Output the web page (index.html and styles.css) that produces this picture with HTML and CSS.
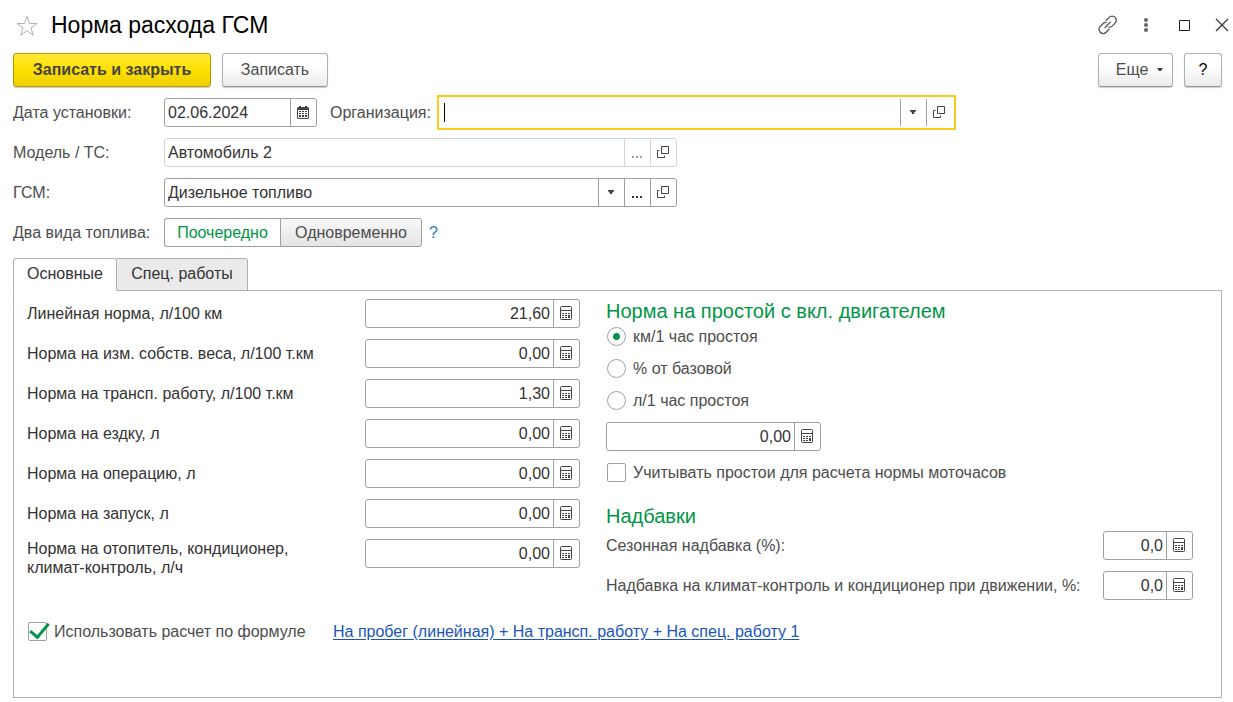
FILE: index.html
```html
<!DOCTYPE html>
<html lang="ru">
<head>
<meta charset="utf-8">
<meta name="viewport" content="width=device-width, initial-scale=1">
<title>Норма расхода ГСМ</title>
<link rel="stylesheet" href="styles.css">
</head>
<body>
<svg class="sprite" aria-hidden="true">
  <symbol id="calc" viewBox="0 0 12 14">
    <path d="M1.5 .5h9a1 1 0 0 1 1 1v11a1 1 0 0 1-1 1h-9a1 1 0 0 1-1-1v-11a1 1 0 0 1 1-1zM.5 4.5h11" fill="none" stroke="#444"/>
    <path d="M2 7h2v1H2zM5 7h2v1H5zM8 7h2v1H8zM2 9h2v1H2zM5 9h2v1H5zM2 11h2v1H2zM5 11h2v1H5zM8 9h2v3H8z" fill="#444"/>
  </symbol>
  <symbol id="open" viewBox="0 0 12 12">
    <path d="M4.5 .5h7v7h-7zM2.500 4.500h-2v7h7v-2" fill="none" stroke="#444"/>
  </symbol>
  <symbol id="arrow" viewBox="0 0 6 4">
    <path d="M0 0h6v1L4 3v1H2V3L0 1z" fill="#444"/>
  </symbol>
  <symbol id="dots" viewBox="0 0 10 2">
    <path d="M0 0h2v2H0zM4 0h2v2H4zM8 0h2v2H8z" fill="currentColor"/>
  </symbol>
</svg>

<header class="header">
  <button class="icon-btn" aria-label="В избранное"><svg width="22" height="22" viewBox="0 0 22 22"><path d="M11 1.500l2.500 7h7.500l-6 4.400 2.300 7.300-6.300-4.500-6.300 4.500L7 12.900 1 8.500h7.500z" fill="none" stroke="#aab2ba"/></svg></button>
  <h1 class="title">Норма расхода ГСМ</h1>
  <div class="window-tools">
    <button class="icon-btn" aria-label="Ссылка"><svg width="20" height="20" viewBox="0 0 20 20" fill="none" stroke="#555" stroke-width="1.300" stroke-linecap="round"><path d="M8.300 5.300l2.900-2.900a3.900 3.900 0 0 1 5.900 0a3.900 3.900 0 0 1 0 5.700l-3 3a3.900 3.900 0 0 1-3 1.100M11 14.300l-2.900 2.900a3.900 3.900 0 0 1-5.900 0a3.900 3.900 0 0 1 0-5.700l3-3a3.900 3.900 0 0 1 3-1.100M7 12.500l5.400-5.400"/></svg></button>
    <button class="icon-btn" aria-label="Меню"><svg width="20" height="20" viewBox="0 0 20 20" fill="#666"><circle cx="10" cy="5" r="2"/><circle cx="10" cy="10" r="2"/><circle cx="10" cy="15" r="2"/></svg></button>
    <button class="icon-btn" aria-label="Развернуть"><svg width="20" height="20" viewBox="0 0 20 20"><path d="M5.500 5.500h10v10h-10z" fill="none" stroke="#222"/></svg></button>
    <button class="icon-btn" aria-label="Закрыть"><svg width="20" height="20" viewBox="0 0 20 20"><path d="M4 4l12 12M16 4L4 16" fill="none" stroke="#333" stroke-width="1.200"/></svg></button>
  </div>
</header>

<main class="form">
  <div class="commands">
    <button class="btn btn-primary">Записать и закрыть</button>
    <button class="btn btn-save">Записать</button>
    <button class="btn btn-more">Еще <svg width="6" height="3" viewBox="0 0 6 3"><path d="M0 0h6L4 3H2z" fill="#444"/></svg></button>
    <button class="btn btn-help">?</button>
  </div>

  <div class="row">
    <label class="row-label" for="date">Дата установки:</label>
    <div class="field field-date">
      <input id="date" type="text" value="02.06.2024">
      <button aria-label="Календарь"><svg width="12" height="13" viewBox="0 0 12 13"><path d="M2 0h2v1h4V0h2v1h1l1 1v10l-1 1H1l-1-1V2l1-1h1z" fill="#444"/><path d="M1 4h10v8H1z" fill="#fff"/><path d="M2 5h2v1H2zM5 5h2v1H5zM8 5h2v1H8zM2 7h2v1H2zM5 7h2v1H5zM8 7h2v1H8zM2 9h2v2H2zM5 9h2v2H5zM8 9h2v2H8z" fill="#444"/></svg></button>
    </div>
    <label class="org-label" for="org">Организация:</label>
    <div class="field field-ref field-active">
      <span class="caret"></span>
      <input id="org" type="text">
      <button aria-label="Выбрать из списка"><svg width="6" height="4"><use href="#arrow"/></svg></button>
      <button aria-label="Открыть"><svg width="12" height="12"><use href="#open"/></svg></button>
    </div>
  </div>

  <div class="row">
    <label class="row-label" for="model">Модель / ТС:</label>
    <div class="field field-ref field-locked">
      <input id="model" type="text" value="Автомобиль 2" readonly>
      <button class="choose" aria-label="Выбрать"><svg width="10" height="2"><use href="#dots"/></svg></button>
      <button aria-label="Открыть"><svg width="12" height="12"><use href="#open"/></svg></button>
    </div>
  </div>

  <div class="row">
    <label class="row-label" for="fuel">ГСМ:</label>
    <div class="field field-ref">
      <input id="fuel" type="text" value="Дизельное топливо">
      <button aria-label="Выбрать из списка"><svg width="6" height="4"><use href="#arrow"/></svg></button>
      <button class="choose" aria-label="Выбрать"><svg width="10" height="2"><use href="#dots"/></svg></button>
      <button aria-label="Открыть"><svg width="12" height="12"><use href="#open"/></svg></button>
    </div>
  </div>

  <div class="row">
    <span class="row-label" id="two-fuels">Два вида топлива:</span>
    <div class="toggle" role="group" aria-labelledby="two-fuels">
      <button aria-pressed="true">Поочередно</button>
      <button aria-pressed="false">Одновременно</button>
    </div>
    <button class="hint">?</button>
  </div>

  <section class="pages">
    <div class="tabs" role="tablist">
      <button class="tab" role="tab" aria-selected="true">Основные</button>
      <button class="tab" role="tab" aria-selected="false">Спец. работы</button>
    </div>
    <div class="panel" role="tabpanel">
      <div class="norms">
        <div class="norm"><label for="n1">Линейная норма, л/100 км</label><div class="field field-num"><input id="n1" type="text" value="21,60"><button aria-label="Калькулятор"><svg width="12" height="14"><use href="#calc"/></svg></button></div></div>
        <div class="norm"><label for="n2">Норма на изм. собств. веса, л/100 т.км</label><div class="field field-num"><input id="n2" type="text" value="0,00"><button aria-label="Калькулятор"><svg width="12" height="14"><use href="#calc"/></svg></button></div></div>
        <div class="norm"><label for="n3">Норма на трансп. работу, л/100 т.км</label><div class="field field-num"><input id="n3" type="text" value="1,30"><button aria-label="Калькулятор"><svg width="12" height="14"><use href="#calc"/></svg></button></div></div>
        <div class="norm"><label for="n4">Норма на ездку, л</label><div class="field field-num"><input id="n4" type="text" value="0,00"><button aria-label="Калькулятор"><svg width="12" height="14"><use href="#calc"/></svg></button></div></div>
        <div class="norm"><label for="n5">Норма на операцию, л</label><div class="field field-num"><input id="n5" type="text" value="0,00"><button aria-label="Калькулятор"><svg width="12" height="14"><use href="#calc"/></svg></button></div></div>
        <div class="norm"><label for="n6">Норма на запуск, л</label><div class="field field-num"><input id="n6" type="text" value="0,00"><button aria-label="Калькулятор"><svg width="12" height="14"><use href="#calc"/></svg></button></div></div>
        <div class="norm norm-tall"><label for="n7">Норма на отопитель, кондиционер,<br>климат-контроль, л/ч</label><div class="field field-num"><input id="n7" type="text" value="0,00"><button aria-label="Калькулятор"><svg width="12" height="14"><use href="#calc"/></svg></button></div></div>
      </div>

      <div class="extras">
        <h2 class="group-title">Норма на простой с вкл. двигателем</h2>
        <div class="radios">
          <label class="option"><input type="radio" name="idle" checked>км/1 час простоя</label>
          <label class="option"><input type="radio" name="idle">% от базовой</label>
          <label class="option"><input type="radio" name="idle">л/1 час простоя</label>
        </div>
        <div class="field field-num"><input type="text" value="0,00" aria-label="Норма на простой"><button aria-label="Калькулятор"><svg width="12" height="14"><use href="#calc"/></svg></button></div>
        <label class="option option-idle"><input type="checkbox">Учитывать простои для расчета нормы моточасов</label>
        <h2 class="group-title">Надбавки</h2>
        <div class="surcharges">
          <div class="surcharge"><label for="s1">Сезонная надбавка (%):</label><div class="field field-small"><input id="s1" type="text" value="0,0"><button aria-label="Калькулятор"><svg width="12" height="14"><use href="#calc"/></svg></button></div></div>
          <div class="surcharge"><label for="s2">Надбавка на климат-контроль и кондиционер при движении, %:</label><div class="field field-small"><input id="s2" type="text" value="0,0"><button aria-label="Калькулятор"><svg width="12" height="14"><use href="#calc"/></svg></button></div></div>
        </div>
      </div>

      <div class="formula">
        <label class="option option-formula"><input type="checkbox" checked>Использовать расчет по формуле</label>
        <a class="formula-link" href="#">На пробег (линейная) + На трансп. работу + На спец. работу 1</a>
      </div>
    </div>
  </section>
</main>
</body>
</html>
```

FILE: styles.css
```css
* {
  box-sizing: border-box;
}

body {
  margin: 0;
  min-height: 100vh;
  display: flex;
  flex-direction: column;
  background: #fff;
  color: #4d4d4d;
  font: 16px/19px "Liberation Sans", Arial, sans-serif;
}

button,
input {
  font: inherit;
  color: inherit;
  margin: 0;
  padding: 0;
}

button {
  display: flex;
  align-items: center;
  justify-content: center;
  border: 0;
  background: none;
  white-space: nowrap;
}

svg {
  display: block;
  flex: none;
}

.sprite {
  position: absolute;
  width: 0;
  height: 0;
}

/* Window header */
.header {
  display: flex;
  align-items: center;
  gap: 13px;
  padding: 11px 1px 13px 16px;
}

.title {
  margin: 0;
  color: #000;
  font-size: 23px;
  font-weight: 400;
  line-height: 29px;
}

.window-tools {
  display: flex;
  gap: 18px;
  margin-left: auto;
  padding-bottom: 2px;
}

/* Form */
.form {
  flex: 1;
  display: flex;
  flex-direction: column;
  gap: 11px;
  padding: 0 11px 4px 13px;
}

.commands {
  display: flex;
  gap: 11px;
}

.btn {
  height: 34px;
  padding: 0 8px 2px;
  border: 1px solid #b0b0b0;
  border-bottom-color: #999;
  border-radius: 3px;
  background: linear-gradient(#fff 40%, #ebebeb);
  box-shadow: 0 1px 1px #ccc;
}

.btn-primary {
  min-width: 198px;
  border-color: #b39b00;
  background: linear-gradient(#ffe938, #fee000 50%, #edd000);
  color: #444;
  font-weight: 700;
}

.btn-save {
  min-width: 106px;
}

.btn-more {
  gap: 9px;
  min-width: 75px;
  margin-left: auto;
  padding-left: 16px;
}

.btn-help {
  width: 38px;
  color: #000;
}

.row {
  display: flex;
  align-items: center;
}

.row-label {
  flex: none;
  width: 151px;
}

.org-label {
  flex: none;
  width: 110px;
  margin-left: 13px;
}

/* Input fields */
.field {
  display: flex;
  height: 29px;
  border: 1px solid #a0a0a0;
  border-radius: 3px;
  background: #fff;
  color: #333;
}

.field input {
  flex: 1;
  width: 0;
  min-width: 0;
  padding: 0 3px;
  border: 0;
  outline: 0;
  background: none;
}

.field button {
  flex: none;
  width: 26px;
  padding: 0 1px 1px 0;
  border-left: 1px solid #a0a0a0;
}

.field .choose {
  align-items: flex-end;
  padding-bottom: 8px;
}

.field-date {
  width: 153px;
}

.field-ref {
  flex: 0 1 513px;
}

.field-num {
  width: 215px;
}

.field-small {
  width: 90px;
}

.field-num input,
.field-small input {
  text-align: right;
}

.field-locked,
.field-locked button {
  border-color: #d4d4d4;
}

.field-locked .choose {
  color: #a0a0a0;
}

.field-active {
  border-color: transparent;
  border-radius: 0;
  outline: 2px solid #fccc1c;
  outline-offset: 1px;
}

.caret {
  align-self: center;
  width: 1px;
  height: 19px;
  margin-left: 3px;
  background: #000;
}

.toggle {
  display: flex;
}

.toggle button {
  height: 29px;
  min-width: 142px;
  border: 1px solid #a0a0a0;
  border-radius: 0 3px 3px 0;
  background: linear-gradient(#f8f8f8, #e4e4e4);
}

.toggle button[aria-pressed="true"] {
  min-width: 116px;
  border-right: 0;
  border-radius: 3px 0 0 3px;
  background: #fff;
  color: #009646;
}

.hint {
  margin-left: 7px;
  color: #1a7dc4;
}

/* Tabs */
.pages {
  flex: 1;
  display: flex;
  flex-direction: column;
}

.tabs {
  display: flex;
  margin-bottom: -1px;
  z-index: 1;
}

.tab {
  height: 33px;
  min-width: 131px;
  padding-bottom: 2px;
  border: 1px solid #b0b0b0;
  border-left: 0;
  border-radius: 0 3px 0 0;
  background: #eaeaea;
  color: #333;
}

.tab[aria-selected="true"] {
  min-width: 104px;
  border-left: 1px solid #b0b0b0;
  border-bottom-color: #fff;
  border-radius: 3px 3px 0 0;
  background: #fff;
}

.panel {
  flex: 1;
  display: grid;
  grid-template-columns: 553px minmax(0, 1fr);
  grid-template-rows: auto 1fr;
  column-gap: 26px;
  row-gap: 22px;
  padding: 8px 28px 13px 13px;
  border: 1px solid #b0b0b0;
}

.norms,
.surcharges {
  display: flex;
  flex-direction: column;
  gap: 11px;
}

.norm {
  display: flex;
  justify-content: space-between;
  height: 29px;
  color: #333;
}

.norm label {
  padding-top: 5px;
}

.norm-tall {
  height: auto;
}

.norm-tall label {
  padding-top: 0;
}

.group-title {
  margin: 0;
  color: #009646;
  font-size: 20px;
  font-weight: 400;
  line-height: 24px;
}

.radios {
  display: flex;
  flex-direction: column;
  gap: 13px;
  padding: 4px 0 12px;
}

.option {
  display: flex;
  align-items: center;
  gap: 7px;
  padding-left: 1px;
}

.option-idle {
  margin: 12px 0 22px;
}

.option-formula {
  min-width: 292px;
}

.option input {
  flex: none;
  appearance: none;
  width: 19px;
  height: 19px;
  border: 1px solid #a0a0a0;
  border-radius: 2px;
  background: #fff;
}

.option input[type="radio"] {
  border-radius: 50%;
}

.option input[type="radio"]:checked {
  background: radial-gradient(circle, #009646 3px, #fff 4px);
}

.option input[type="checkbox"]:checked {
  position: relative;
}

.option input[type="checkbox"]:checked::after {
  content: "";
  position: absolute;
  left: 5px;
  top: -4px;
  width: 8px;
  height: 16px;
  border: solid #009646;
  border-width: 0 3px 3px 0;
  transform: rotate(40deg);
}

.surcharges {
  padding-top: 3px;
}

.surcharge {
  display: flex;
  align-items: center;
  justify-content: space-between;
  gap: 6px;
}

.formula {
  grid-column: 1 / -1;
  display: flex;
  align-items: flex-start;
  gap: 14px;
}

.formula-link {
  color: #1a56b8;
  text-underline-offset: 2px;
}
```
